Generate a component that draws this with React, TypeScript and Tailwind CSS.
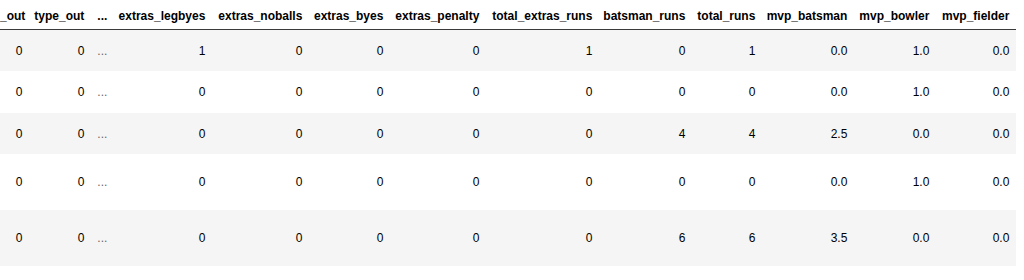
const columns = [
  { name: "_out", w: "w-[29px]" },
  { name: "type_out", w: "w-[62px]" },
  { name: "...", w: "w-[23px]" },
  { name: "extras_legbyes", w: "w-[98px]" },
  { name: "extras_noballs", w: "w-[97px]" },
  { name: "extras_byes", w: "w-[81px]" },
  { name: "extras_penalty", w: "w-[96px]" },
  { name: "total_extras_runs", w: "w-[113px]" },
  { name: "batsman_runs", w: "w-[93px]" },
  { name: "total_runs", w: "w-[70px]" },
  { name: "mvp_batsman", w: "w-[92px]" },
  { name: "mvp_bowler", w: "w-[82px]" },
  { name: "mvp_fielder", w: "w-[80px]" },
];

const rows = [
  { h: "h-[41px]", bg: "bg-[#f5f5f5]", cells: ["0", "0", "...", "1", "0", "0", "0", "1", "0", "1", "0.0", "1.0", "0.0"] },
  { h: "h-[42px]", bg: "bg-white", cells: ["0", "0", "...", "0", "0", "0", "0", "0", "0", "0", "0.0", "1.0", "0.0"] },
  { h: "h-[41px]", bg: "bg-[#f5f5f5]", cells: ["0", "0", "...", "0", "0", "0", "0", "0", "4", "4", "2.5", "0.0", "0.0"] },
  { h: "h-[56px]", bg: "bg-white", cells: ["0", "0", "...", "0", "0", "0", "0", "0", "0", "0", "0.0", "1.0", "0.0"] },
  { h: "h-[56px]", bg: "bg-[#f5f5f5]", cells: ["0", "0", "...", "0", "0", "0", "0", "0", "6", "6", "3.5", "0.0", "0.0"] },
];

export default function App() {
  return (
    <div
      className="w-[1024px] h-[280px] overflow-hidden bg-white text-[12px] text-black"
      style={{ fontFamily: "'Liberation Sans', Arial, sans-serif" }}
    >
      <table className="table-fixed border-collapse">
        <colgroup>
          {columns.map((c) => (
            <col key={c.name} className={c.w} />
          ))}
        </colgroup>

        {/* --- HEADER --- */}
        <thead>
          <tr className="h-[29px] border-b border-[#3a3a3a]">
            {columns.map((c, j) => (
              <th
                key={c.name}
                className={`${j === 0 ? "pr-[4px]" : "pr-[7px]"} pl-0 pb-[6px] align-bottom text-right font-bold whitespace-nowrap leading-[14px]`}
              >
                {c.name}
              </th>
            ))}
          </tr>
        </thead>

        {/* --- BODY --- */}
        <tbody>
          <tr className="h-px">
            <td colSpan={13} className="p-0 h-px bg-white"></td>
          </tr>
          {rows.map((r, i) => (
            <tr key={i} className={`${r.h} ${r.bg}`}>
              {r.cells.map((v, j) => (
                <td
                  key={j}
                  className={
                    j === 2
                      ? "pl-[6px] pr-0 text-left align-middle text-[#666] whitespace-nowrap"
                      : "pr-[7px] pl-0 text-right align-middle whitespace-nowrap"
                  }
                >
                  {v}
                </td>
              ))}
            </tr>
          ))}
        </tbody>
      </table>
    </div>
  );
}
